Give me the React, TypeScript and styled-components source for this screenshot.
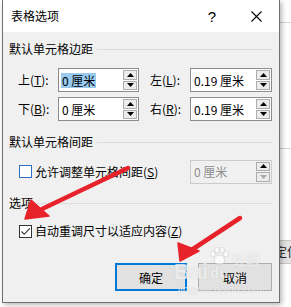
import React from "react";
import styled, { createGlobalStyle } from "styled-components";

const Global = createGlobalStyle`
  html, body { margin: 0; padding: 0; background: #ffffff; overflow: hidden; }
  body { font-family: "Noto Sans CJK SC", "Noto Sans", sans-serif; }
`;

const Page = styled.div`
  position: relative;
  width: 291px;
  height: 307px;
  overflow: hidden;
  background: #ffffff;
`;

const SheetLine = styled.div<{ $top: number }>`
  position: absolute;
  left: 279px;
  right: 0;
  top: ${(p) => p.$top}px;
  height: 1px;
  background: #d4d4d4;
`;

const SheetBand = styled.div`
  position: absolute;
  left: 279px;
  right: 0;
  top: 240px;
  height: 22px;
  background: #e3e3e3;
  border-top: 1px solid #c8c8c8;
  border-bottom: 1px solid #c8c8c8;
  font-size: 12px;
  line-height: 22px;
  color: #222;
  white-space: nowrap;
  text-indent: -4px;
`;

const Dialog = styled.div`
  position: relative;
  margin-left: 2px;
  width: 278px;
  height: 303px;
  box-sizing: border-box;
  border: 1px solid #707070;
  border-top: none;
  background: #f0f0f0;
  box-shadow: 2px 2px 5px rgba(0, 0, 0, 0.28);
  display: flex;
  flex-direction: column;
`;

const TitleBar = styled.div`
  height: 32px;
  flex: none;
  background: #ffffff;
  display: flex;
  align-items: center;
  padding-left: 8px;
  color: #000;
`;

const Title = styled.div`
  font-size: 12px;
  line-height: 16px;
  flex: 1;
`;

const Help = styled.div`
  width: 16px;
  text-align: center;
  font-family: "Liberation Sans", sans-serif;
  font-size: 15px;
  margin-right: 28px;
`;

const Close = styled.div`
  width: 16px;
  height: 16px;
  display: flex;
  align-items: center;
  justify-content: center;
  margin-right: 15px;
`;

const Body = styled.div`
  flex: 1;
  display: flex;
  flex-direction: column;
  padding: 9px 6px 0 6px;
`;

const SectionHead = styled.div<{ $mt: number }>`
  display: flex;
  align-items: center;
  gap: 4px;
  font-size: 12px;
  line-height: 16px;
  color: #000;
  margin-top: ${(p) => p.$mt}px;
  &::after {
    content: "";
    flex: 1;
    height: 1px;
    background: #dcdcdc;
  }
`;

const Row = styled.div<{ $mt: number }>`
  display: flex;
  align-items: center;
  margin-top: ${(p) => p.$mt}px;
  padding-left: 9px;
  height: 24px;
`;

const Field = styled.div<{ $gap?: number }>`
  display: flex;
  align-items: center;
  margin-left: ${(p) => p.$gap ?? 0}px;
`;

const Label = styled.div`
  width: 40px;
  font-size: 12px;
  line-height: 16px;
  color: #000;
  white-space: nowrap;
`;

const U = styled.span`
  text-decoration: underline;
  text-underline-offset: 1px;
`;

const Input = styled.div<{ $w: number; $disabled?: boolean }>`
  position: relative;
  width: ${(p) => p.$w}px;
  height: 24px;
  box-sizing: border-box;
  border: 1px solid ${(p) => (p.$disabled ? "#cccccc" : "#8c8c8c")};
  background: ${(p) => (p.$disabled ? "#f0f0f0" : "#ffffff")};
  display: flex;
  align-items: center;
  padding-left: 2px;
  font-size: 12px;
  color: ${(p) => (p.$disabled ? "#8d8d8d" : "#000")};
`;

const Value = styled.span<{ $sel?: boolean }>`
  background: ${(p) => (p.$sel ? "#99c9ef" : "transparent")};
  line-height: 15px;
  padding: 0 1px;
  white-space: pre;
`;

const Spinner = styled.div`
  position: absolute;
  right: 1px;
  top: 1px;
  bottom: 1px;
  width: 14px;
  display: flex;
  flex-direction: column;
  gap: 1px;
`;

const SpinBtn = styled.div`
  flex: 1;
  box-sizing: border-box;
  border: 1px solid #adadad;
  background: #ececec;
  display: flex;
  align-items: center;
  justify-content: center;
`;

const CheckRow = styled.div<{ $mt: number; $h: number }>`
  display: flex;
  align-items: center;
  margin-top: ${(p) => p.$mt}px;
  height: ${(p) => p.$h}px;
  padding-left: 10px;
  padding-right: 1px;
`;

const Box = styled.div<{ $blue?: boolean }>`
  width: 13px;
  height: 13px;
  box-sizing: border-box;
  border: 1px solid ${(p) => (p.$blue ? "#2d6fc0" : "#333333")};
  background: #ffffff;
  display: flex;
  align-items: center;
  justify-content: center;
  flex: none;
`;

const CheckLabel = styled.div`
  margin-left: 3px;
  font-size: 12px;
  line-height: 16px;
  color: #000;
  white-space: nowrap;
  flex: 1;
`;

const Buttons = styled.div`
  display: flex;
  justify-content: flex-end;
  gap: 11px;
  margin-top: 24px;
  padding-right: 1px;
`;

const Button = styled.div<{ $primary?: boolean; $w: number }>`
  width: ${(p) => p.$w}px;
  height: 28px;
  box-sizing: border-box;
  border: ${(p) => (p.$primary ? "2px solid #0078d7" : "1px solid #adadad")};
  background: #e1e1e1;
  display: flex;
  align-items: center;
  justify-content: center;
  font-size: 12px;
  color: #000;
`;

const Overlay = styled.svg`
  position: absolute;
  left: 0;
  top: 0;
  pointer-events: none;
`;

const Watermark = styled.div`
  position: absolute;
  left: 174px;
  top: 246px;
  width: 96px;
  color: rgba(255, 255, 255, 0.7);
  text-shadow: 0 0 1px rgba(140, 140, 140, 0.4);
  font-family: "Liberation Sans", sans-serif;
  pointer-events: none;
  display: flex;
  flex-direction: column;
`;

const WmTop = styled.div`
  display: flex;
  align-items: flex-end;
  height: 38px;
`;

const WmBai = styled.span`
  font-size: 22px;
  font-weight: bold;
  line-height: 24px;
`;

const WmDu = styled.span`
  display: flex;
  flex-direction: column;
  align-items: center;
  font-size: 15px;
  font-weight: bold;
  line-height: 16px;
  margin-left: 1px;
  margin-bottom: 3px;
`;

const WmCn = styled.span`
  font-family: "Noto Sans CJK SC", sans-serif;
  font-size: 14px;
  font-weight: bold;
  line-height: 18px;
  align-self: flex-start;
  margin-left: 3px;
  margin-top: 4px;
`;

const WmSmall = styled.div`
  font-size: 10px;
  line-height: 11px;
  letter-spacing: 0.2px;
  margin-left: 4px;
`;

const Up = ({ c = "#000" }: { c?: string }) => (
  <svg width="7" height="4" viewBox="0 0 7 4"><path d="M0 4 L3.5 0 L7 4 Z" fill={c} /></svg>
);
const Down = ({ c = "#000" }: { c?: string }) => (
  <svg width="7" height="4" viewBox="0 0 7 4"><path d="M0 0 L3.5 4 L7 0 Z" fill={c} /></svg>
);

const Spin = ({ disabled }: { disabled?: boolean }) => (
  <Spinner>
    <SpinBtn><Up /></SpinBtn>
    <SpinBtn><Down c={disabled ? "#a8a8a8" : "#000"} /></SpinBtn>
  </Spinner>
);

const Paw = () => (
  <svg width="20" height="18" viewBox="0 0 20 18" fill="rgba(255,255,255,0.75)" stroke="rgba(150,150,150,0.35)" strokeWidth="0.8">
    <ellipse cx="4" cy="7" rx="2.4" ry="3" />
    <ellipse cx="8" cy="3" rx="2.4" ry="3" />
    <ellipse cx="13" cy="3" rx="2.4" ry="3" />
    <ellipse cx="17" cy="7" rx="2.4" ry="3" />
    <path d="M10.5 8 C6 8 4 14 6 16 C8 17.5 13 17.5 15 16 C17 14 15 8 10.5 8 Z" />
  </svg>
);

export default function App() {
  return (
    <Page>
      <Global />
      <SheetLine $top={22} />
      <SheetLine $top={148} />
      <SheetBand>定位</SheetBand>
      <Dialog>
        <TitleBar>
          <Title>表格选项</Title>
          <Help>?</Help>
          <Close>
            <svg width="11" height="11" viewBox="0 0 11 11">
              <path d="M0.5 0.5 L10.5 10.5 M10.5 0.5 L0.5 10.5" stroke="#000" strokeWidth="1.1" />
            </svg>
          </Close>
        </TitleBar>
        <Body>
          <SectionHead $mt={0}>默认单元格边距</SectionHead>
          <Row $mt={11}>
            <Field>
              <Label>上(<U>T</U>):</Label>
              <Input $w={81}>
                <Value $sel>0 厘米</Value>
                <Spin />
              </Input>
            </Field>
            <Field $gap={11}>
              <Label>左(<U>L</U>):</Label>
              <Input $w={82}>
                <Value>0.19 厘米</Value>
                <Spin />
              </Input>
            </Field>
          </Row>
          <Row $mt={5}>
            <Field>
              <Label>下(<U>B</U>):</Label>
              <Input $w={81}>
                <Value>0 厘米</Value>
                <Spin />
              </Input>
            </Field>
            <Field $gap={11}>
              <Label>右(<U>R</U>):</Label>
              <Input $w={82}>
                <Value>0.19 厘米</Value>
                <Spin />
              </Input>
            </Field>
          </Row>
          <SectionHead $mt={13}>默认单元格间距</SectionHead>
          <CheckRow $mt={9} $h={25}>
            <Box $blue />
            <CheckLabel>允许调整单元格间距(<U>S</U>)</CheckLabel>
            <Input $w={82} $disabled>
              <Value>0 厘米</Value>
              <Spin disabled />
            </Input>
          </CheckRow>
          <SectionHead $mt={11}>选项</SectionHead>
          <CheckRow $mt={12} $h={16}>
            <Box>
              <svg width="11" height="11" viewBox="0 0 11 11">
                <path d="M1.5 5.5 L4.3 8.3 L9.8 2.3" fill="none" stroke="#333" strokeWidth="1.1" />
              </svg>
            </Box>
            <CheckLabel>自动重调尺寸以适应内容(<U>Z</U>)</CheckLabel>
          </CheckRow>
          <Buttons>
            <Button $primary $w={72}>确定</Button>
            <Button $w={74}>取消</Button>
          </Buttons>
        </Body>
      </Dialog>
      <Watermark>
        <WmTop>
          <WmBai>Bai</WmBai>
          <WmDu><Paw />du</WmDu>
          <WmCn>经验</WmCn>
        </WmTop>
        <WmSmall>jingyan.baidu.com</WmSmall>
      </Watermark>
      <Overlay width="291" height="307" viewBox="0 0 291 307">
        <g fill="#e8222a" stroke="#e8222a" strokeLinecap="round" strokeLinejoin="round">
          <line x1="128" y1="168" x2="42" y2="209" strokeWidth="4.5" />
          <path d="M25 219 L31 200 L49 216 Z" strokeWidth="1.5" />
          <line x1="240" y1="218" x2="190" y2="251" strokeWidth="4.5" />
          <path d="M180 261 L178 243 L199 251 Z" strokeWidth="1.5" />
        </g>
      </Overlay>
    </Page>
  );
}
